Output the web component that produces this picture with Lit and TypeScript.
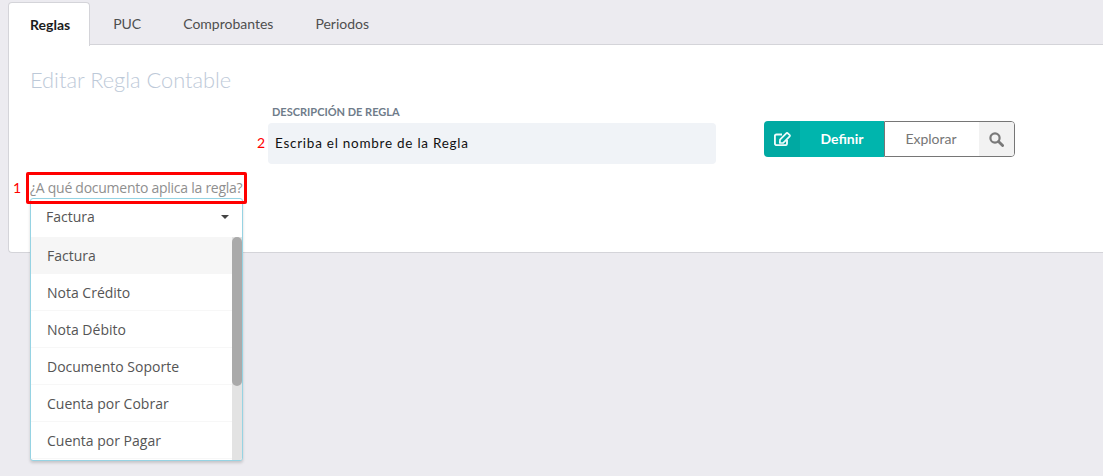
import { LitElement, html, css } from "lit";
import { customElement } from "lit/decorators.js";

const tabs = ["Reglas", "PUC", "Comprobantes", "Periodos"];
const docs = [
  "Factura",
  "Nota Crédito",
  "Nota Débito",
  "Documento Soporte",
  "Cuenta por Cobrar",
  "Cuenta por Pagar",
];

@customElement("app-root")
export class AppRoot extends LitElement {
  static styles = css`
    :host {
      display: block;
      height: 476px;
      overflow: hidden;
      background: #ecebf0;
      font-family: "Lato", sans-serif;
    }

    .tabs {
      display: flex;
      height: 42px;
      margin: 2px 0 0 8px;
      position: relative;
      z-index: 1;
    }

    .tab {
      display: flex;
      align-items: center;
      padding: 0 21px;
      font-size: 14px;
      color: #4f4f4f;
    }

    .tab.active {
      height: 43px;
      margin-right: 2px;
      padding: 0 19px 0 21px;
      background: #fff;
      border: 1px solid #d4d4d9;
      border-bottom: 0;
      border-radius: 4px 4px 0 0;
      font-weight: 700;
      color: #1b1c1d;
    }

    .panel {
      height: 207px;
      margin-left: 8px;
      padding: 0 21px;
      background: #fff;
      border: 1px solid #d4d4d9;
      border-right: 0;
      border-radius: 0 0 0 4px;
    }

    h1 {
      margin: 21px 0 0;
      font-size: 21.8px;
      line-height: 28px;
      font-weight: 300;
      color: #bdc9d8;
    }

    .row {
      display: flex;
      align-items: flex-start;
      margin: 11px 0 0 238px;
    }

    .desc {
      width: 448px;
    }

    .desc label {
      display: block;
      padding-left: 4px;
      font-size: 11px;
      line-height: 13px;
      font-weight: 700;
      color: #6f7c8a;
    }

    .desc .input {
      position: relative;
      margin-top: 5px;
      height: 41px;
      box-sizing: border-box;
      padding: 0 0 2px 7px;
      display: flex;
      align-items: center;
      background: #f0f3f7;
      border-radius: 4px;
      font-size: 13.5px;
      letter-spacing: 0.74px;
      color: #111;
    }

    .mark {
      position: absolute;
      font-family: "Lato", sans-serif;
      font-size: 14px;
      line-height: 16px;
      color: #f00;
      letter-spacing: 0;
    }

    .desc .mark {
      left: -11px;
      top: 12px;
    }

    .actions {
      display: flex;
      height: 36px;
      width: 251px;
      margin: 16px 0 0 48px;
      box-sizing: border-box;
      font-size: 14px;
    }

    .action-icon {
      width: 36px;
      display: flex;
      align-items: center;
      justify-content: center;
      background: #00a9a2;
      border-radius: 4px 0 0 4px;
    }

    .define {
      width: 84px;
      box-sizing: border-box;
      padding-bottom: 2px;
      display: flex;
      align-items: center;
      justify-content: center;
      background: #00b5ad;
      color: #fff;
      font-weight: 700;
    }

    .explore {
      flex: 1;
      display: flex;
      background: #fff;
      border: 1px solid #767676;
      border-radius: 0 4px 4px 0;
      color: #767676;
    }

    .explore span {
      flex: 1;
      display: flex;
      align-items: center;
      justify-content: center;
      padding: 0 2px 2px 0;
    }

    .explore div {
      width: 35px;
      display: flex;
      align-items: center;
      justify-content: center;
      background: #f2f2f2;
      border-radius: 0 3px 3px 0;
    }

    .question {
      position: relative;
      width: 213px;
      margin-top: 14px;
      font-family: "Open Sans", sans-serif;
    }

    .question-text {
      height: 20px;
      font-size: 14px;
      line-height: 20px;
      letter-spacing: -0.26px;
      white-space: nowrap;
      color: #8f8f8f;
    }

    .highlight {
      position: absolute;
      left: -4px;
      top: -6px;
      width: 215px;
      height: 26px;
      border: 3px solid #f00;
      border-radius: 2px;
      z-index: 3;
    }

    .question .mark {
      left: -17px;
      top: 2px;
    }

    .select {
      position: absolute;
      z-index: 2;
      left: 0;
      top: 20px;
      width: 213px;
      height: 263px;
      box-sizing: border-box;
      background: #fff;
      border: 1px solid #96d3e3;
      border-radius: 3px;
      box-shadow: 0 2px 3px rgba(0, 0, 0, 0.16);
      display: flex;
      flex-direction: column;
      font-size: 14px;
      color: #555;
    }

    .select-head {
      height: 38px;
      flex: none;
      display: flex;
      align-items: center;
      justify-content: space-between;
      padding: 0 13px 3px 15px;
      box-sizing: border-box;
    }

    .caret {
      width: 0;
      height: 0;
      border: 4px solid transparent;
      border-top-color: #444;
      border-bottom: 0;
    }

    .list-wrap {
      flex: 1;
      min-height: 0;
      display: flex;
    }

    ul {
      flex: 1;
      margin: 0;
      padding: 0;
      list-style: none;
    }

    li {
      height: 37px;
      box-sizing: border-box;
      display: flex;
      align-items: center;
      padding-left: 16px;
      border-bottom: 1px solid #f7f7f7;
    }

    li.current {
      background: #f6f6f6;
      border-bottom-color: #f6f6f6;
    }

    .scrollbar {
      width: 10px;
      flex: none;
      background: #e3e3e3;
      border-radius: 0 0 2px 0;
    }

    .thumb {
      height: 149px;
      background: #aaa;
      border-radius: 5px;
    }
  `;

  render() {
    return html`
      <div class="tabs">
        ${tabs.map(
          (t, i) => html`<div class="tab ${i === 0 ? "active" : ""}">${t}</div>`
        )}
      </div>
      <div class="panel">
        <h1>Editar Regla Contable</h1>
        <div class="row">
          <div class="desc">
            <label>DESCRIPCIÓN DE REGLA</label>
            <div class="input">
              <span class="mark">2</span>
              Escriba el nombre de la Regla
            </div>
          </div>
          <div class="actions">
            <div class="action-icon">
              <svg width="17" height="14" viewBox="0 0 17 14" fill="none">
                <path
                  d="M13 8v3.600a1.500 1.500 0 0 1-1.500 1.500H2.400A1.500 1.500 0 0 1 .9 11.600V4A1.500 1.500 0 0 1 2.400 2.500H8"
                  stroke="#eefbfa"
                  stroke-width="1.900"
                />
                <path
                  d="M6 7.600 12.500 1.100a.8.8 0 0 1 1.100 0L15.700 3.200a.8.8 0 0 1 0 1.100L9.200 10.800 5.800 11Z"
                  stroke="#eefbfa"
                  stroke-width="1.700"
                  stroke-linejoin="round"
                />
              </svg>
            </div>
            <div class="define">Definir</div>
            <div class="explore">
              <span>Explorar</span>
              <div>
                <svg width="15" height="15" viewBox="0 0 15 15" fill="none">
                  <circle cx="6" cy="6" r="4.600" stroke="#797979" stroke-width="2.200" />
                  <path d="M9.500 9.500 13.600 13.600" stroke="#797979" stroke-width="2.800" stroke-linecap="round" />
                </svg>
              </div>
            </div>
          </div>
        </div>
        <div class="question">
          <span class="mark">1</span>
          <div class="question-text">¿A qué documento aplica la regla?</div>
          <div class="highlight"></div>
          <div class="select">
            <div class="select-head">Factura<span class="caret"></span></div>
            <div class="list-wrap">
              <ul>
                ${docs.map(
                  (d, i) => html`<li class=${i === 0 ? "current" : ""}>${d}</li>`
                )}
              </ul>
              <div class="scrollbar"><div class="thumb"></div></div>
            </div>
          </div>
        </div>
      </div>
    `;
  }
}
